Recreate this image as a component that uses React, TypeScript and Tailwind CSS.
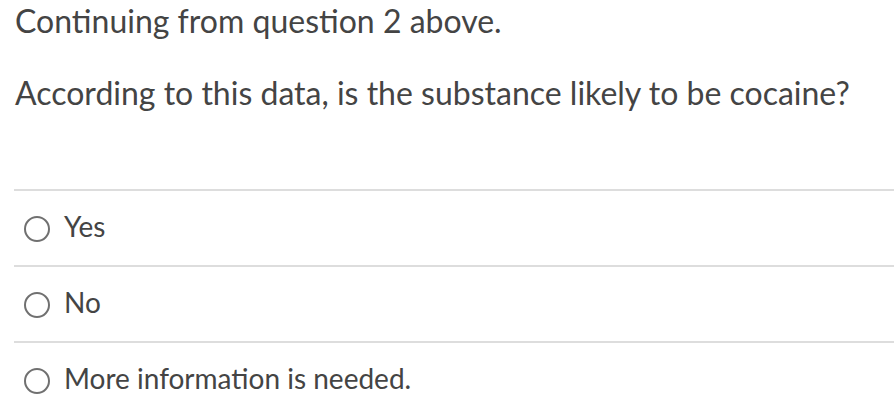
import React from "react";

const options = ["Yes", "No", "More information is needed."];

export default function App() {
  return (
    <div className="w-[894px] h-[420px] bg-white overflow-hidden text-[#444444]" style={{ fontFamily: "Lato, 'Noto Sans', sans-serif" }}>
      <div className="pl-[15px] pt-[1px]">
        <p className="text-[32px] leading-[40px]">Continuing from question 2 above.</p>
        <p className="text-[32px] leading-[40px] mt-[32px]">According to this data, is the substance likely to be cocaine?</p>
      </div>
      <div className="ml-[14px] mt-[76px]">
        {options.map((o) => (
          <div key={o} className="border-t-2 border-[#dddddd] h-[76px] flex items-start">
            <span className="mt-[25px] ml-[10px] w-[26px] h-[26px] rounded-full border-2 border-[#707070] shrink-0" />
            <span className="mt-[19px] ml-[14px] text-[28px] leading-[32px]">{o}</span>
          </div>
        ))}
      </div>
    </div>
  );
}
